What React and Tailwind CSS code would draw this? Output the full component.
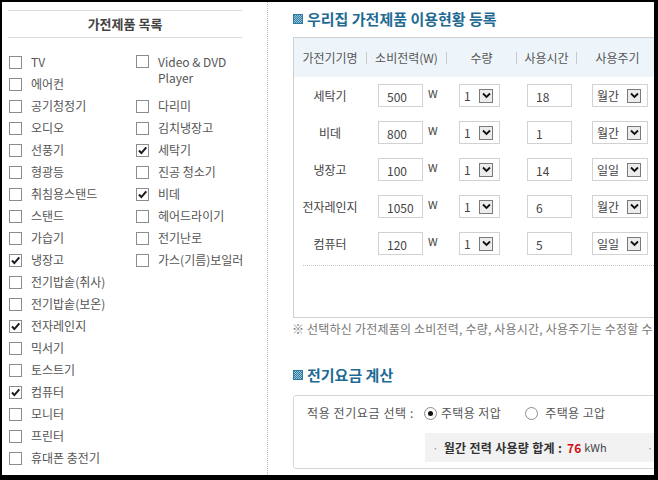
const col1 = [
  { name: "TV" },
  { name: "에어컨" },
  { name: "공기청정기" },
  { name: "오디오" },
  { name: "선풍기" },
  { name: "형광등" },
  { name: "취침용스탠드" },
  { name: "스탠드" },
  { name: "가습기" },
  { name: "냉장고", on: true },
  { name: "전기밥솥(취사)" },
  { name: "전기밥솥(보온)" },
  { name: "전자레인지", on: true },
  { name: "믹서기" },
  { name: "토스트기" },
  { name: "컴퓨터", on: true },
  { name: "모니터" },
  { name: "프린터" },
  { name: "휴대폰 충전기" },
];

const col2 = [
  { name: "다리미" },
  { name: "김치냉장고" },
  { name: "세탁기", on: true },
  { name: "진공 청소기" },
  { name: "비데", on: true },
  { name: "헤어드라이기" },
  { name: "전기난로" },
  { name: "가스(기름)보일러" },
];

const rows = [
  { name: "세탁기", watt: "500", qty: "1", hours: "18", period: "월간" },
  { name: "비데", watt: "800", qty: "1", hours: "1", period: "월간" },
  { name: "냉장고", watt: "100", qty: "1", hours: "14", period: "일일" },
  { name: "전자레인지", watt: "1050", qty: "1", hours: "6", period: "월간" },
  { name: "컴퓨터", watt: "120", qty: "1", hours: "5", period: "일일" },
];

function Check({ on }) {
  return (
    <span className="flex h-[13px] w-[13px] shrink-0 items-center justify-center border border-[#8c8c8c] bg-white">
      {on && (
        <svg width="11" height="11" viewBox="0 0 11 11">
          <path d="M2 5.5l2.4 2.6L9.3 2.4" fill="none" stroke="#1a1a1a" strokeWidth="2" />
        </svg>
      )}
    </span>
  );
}

function Item({ name, on }) {
  return (
    <div className="flex h-[22px] items-center gap-[9px]">
      <Check on={on} />
      <span className="whitespace-nowrap">{name}</span>
    </div>
  );
}

function Mark() {
  return (
    <svg width="10" height="10" viewBox="0 0 10 10" className="shrink-0">
      <defs>
        <pattern id="dots" width="2" height="2" patternUnits="userSpaceOnUse">
          <rect width="2" height="2" fill="#9cc6da" />
          <rect width="1" height="1" fill="#2a7ca3" />
          <rect x="1" y="1" width="1" height="1" fill="#2a7ca3" />
        </pattern>
      </defs>
      <rect x="0.5" y="0.5" width="9" height="9" fill="url(#dots)" stroke="#2a7ca3" />
    </svg>
  );
}

function Drop({ value, width }) {
  return (
    <div className={`flex h-[23px] items-center justify-between border border-[#d2d2d2] bg-white pl-[4px] pr-[6px] ${width}`}>
      <span className="pt-[1px]">{value}</span>
      <span className="flex h-[14px] w-[14px] items-center justify-center border border-[#7a7a7a] bg-[#ececec]">
        <svg width="9" height="7" viewBox="0 0 9 7">
          <path d="M1 1.5l3.5 3.5L8 1.5" fill="none" stroke="#111" strokeWidth="1.8" />
        </svg>
      </span>
    </div>
  );
}

function Field({ value }) {
  return (
    <div className="h-[23px] w-[45px] border border-[#d2d2d2] bg-white pl-[8px] pt-[4px] leading-[16px]">
      {value}
    </div>
  );
}

function Radio({ on }) {
  return (
    <span className="flex h-[13px] w-[13px] items-center justify-center rounded-full border border-[#8c8c8c] bg-white">
      {on && <span className="h-[5px] w-[5px] rounded-full bg-[#111]" />}
    </span>
  );
}

export default function App() {
  return (
    <div
      className="h-[480px] w-[658px] overflow-hidden bg-black pb-[5px] pl-[2px] pr-[4px] pt-[2px] text-[12px] text-[#555]"
      style={{ fontFamily: '"Noto Sans CJK KR", "Noto Sans", sans-serif' }}
    >
      <div className="flex h-[473px] w-[652px] overflow-hidden bg-white">
        {/* left list */}
        <div className="w-[266px] shrink-0 border-r border-dotted border-[#b9b9b9] pl-[6px] pt-[8px]">
          <div className="w-[234px] border-y border-[#dcdcdc]">
            <div className="flex h-[26px] items-center justify-center text-[13px] font-bold text-[#444]">
              가전제품 목록
            </div>
          </div>
          <div className="mt-[13px] flex pl-[1px] leading-[16px]">
            <div className="w-[127px]">
              {col1.map((it) => (
                <Item key={it.name} {...it} />
              ))}
            </div>
            <div>
              <div className="flex h-[44px] gap-[9px] pt-[3px]">
                <span className="mt-[1px]">
                  <Check />
                </span>
                <span className="leading-[16px]">
                  Video &amp; DVD
                  <br />
                  Player
                </span>
              </div>
              {col2.map((it) => (
                <Item key={it.name} {...it} />
              ))}
            </div>
          </div>
        </div>

        {/* right content */}
        <div className="w-[400px] shrink-0 pl-[25px] pt-[7px]">
          <div className="flex h-[20px] items-center gap-[4px] whitespace-nowrap text-[15px] font-bold text-[#1f6a93]">
            <Mark />
            <span>우리집 가전제품 이용현황 등록</span>
          </div>

          <div className="mt-[8px] w-[380px] border border-[#cfcfcf]">
            <div className="flex h-[39px] items-center bg-[#eef5fa] text-[#555]">
              <div className="w-[72px] text-center">가전기기명</div>
              <div className="flex w-[80px] items-center">
                <span className="h-[12px] w-px bg-[#c9c9c9]" />
                <span className="flex-1 text-center">소비전력(W)</span>
              </div>
              <div className="flex w-[70px] items-center">
                <span className="h-[12px] w-px bg-[#c9c9c9]" />
                <span className="flex-1 text-center">수량</span>
              </div>
              <div className="flex w-[60px] items-center">
                <span className="h-[12px] w-px bg-[#c9c9c9]" />
                <span className="flex-1 text-center">사용시간</span>
              </div>
              <div className="flex w-[82px] items-center">
                <span className="h-[12px] w-px bg-[#c9c9c9]" />
                <span className="flex-1 text-center">사용주기</span>
              </div>
            </div>

            {rows.map((r) => (
              <div key={r.name} className="flex h-[37px] items-start pt-[7px] text-[#444]">
                <div className="flex h-[23px] w-[72px] items-center justify-center">{r.name}</div>
                <div className="flex w-[80px] items-start pl-[12px]">
                  <Field value={r.watt} />
                  <span className="ml-[5px] mt-[1px] text-[11px]">W</span>
                </div>
                <div className="w-[70px] pl-[13px]">
                  <Drop value={r.qty} width="w-[41px]" />
                </div>
                <div className="w-[60px] pl-[11px]">
                  <Field value={r.hours} />
                </div>
                <div className="pl-[16px]">
                  <Drop value={r.period} width="w-[56px]" />
                </div>
              </div>
            ))}

            <div className="ml-[9px] mt-[3px] h-[52px] border-t border-dotted border-[#c4c4c4]" />
          </div>

          <div className="-ml-[1px] mt-[4px] whitespace-nowrap leading-[14px] tracking-[0.2px] text-[#777]">
            ※ 선택하신 가전제품의 소비전력, 수량, 사용시간, 사용주기는 수정할 수
          </div>

          <div className="mt-[29px] flex h-[20px] items-center gap-[4px] whitespace-nowrap text-[15px] font-bold text-[#1f6a93]">
            <Mark />
            <span>전기요금 계산</span>
          </div>

          <div className="mt-[10px] w-[380px] rounded-[3px] border border-[#d6d6d6] pb-[6px] pt-[9px]">
            <div className="flex h-[16px] items-center whitespace-nowrap pl-[13px] text-[#555]">
              <span className="tracking-[0.6px]">적용 전기요금 선택 :</span>
              <span className="ml-[10px] flex items-center gap-[4px]">
                <Radio on />
                <span className="tracking-[0.4px]">주택용 저압</span>
              </span>
              <span className="ml-[24px] flex items-center gap-[7px]">
                <Radio />
                <span className="tracking-[0.4px]">주택용 고압</span>
              </span>
            </div>
            <div className="ml-[131px] mt-[12px] flex h-[29px] items-center whitespace-nowrap bg-[#f2f2f2] pl-[7px]">
              <span className="text-[#999]">·</span>
              <span className="ml-[5px] font-bold tracking-[0.3px] text-[#333]">월간 전력 사용량 합계 :</span>
              <span className="ml-[5px] font-bold text-[#cc1111]">76</span>
              <span className="ml-[3px] text-[11px] text-[#444]">kWh</span>
              <span className="ml-[40px] text-[#999]">·</span>
            </div>
          </div>
        </div>
      </div>
    </div>
  );
}
